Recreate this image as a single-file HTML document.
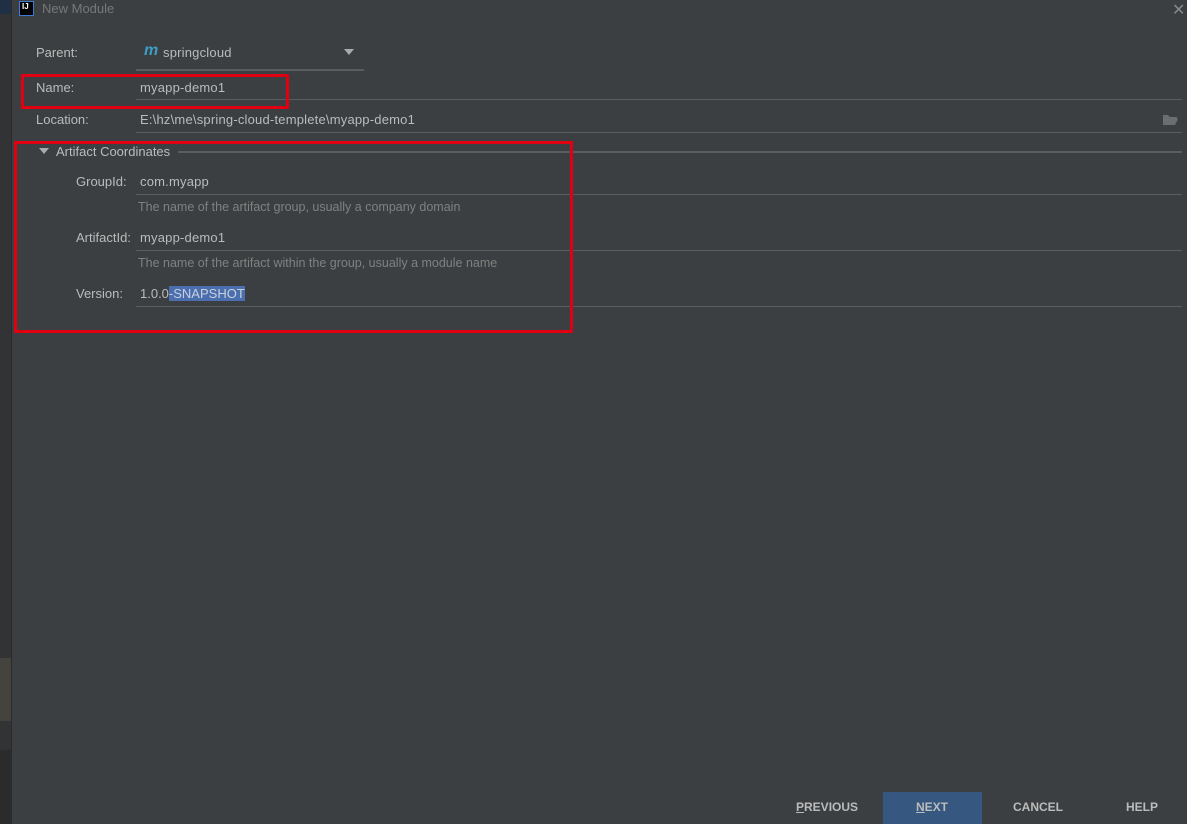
<!DOCTYPE html>
<html><head><style>
body{margin:0;width:1187px;height:824px;background:#3c3f41;font-family:"Liberation Sans",sans-serif;font-size:13px;color:#bbbbbb;position:relative;overflow:hidden}
.a{position:absolute}
.v{letter-spacing:0.2px}
.line{position:absolute;height:1px;background:#5a5d5f}
.red{position:absolute;border:3px solid #e00012;box-sizing:border-box}
.lbl{position:absolute;color:#bbbbbb}
.hint{position:absolute;color:#808080;font-size:12.5px}
.btn{position:absolute;top:792px;font-weight:bold;font-size:12px;color:#bbbbbb}
</style></head><body>
<div class="a" style="left:0;top:0;width:11px;height:824px;background:#313335"></div>
<div class="a" style="left:0;top:0;width:11px;height:14px;background:#1f2f44"></div>
<div class="a" style="left:0;top:658px;width:11px;height:63px;background:#45433d"></div>
<div class="a" style="left:0;top:750px;width:11px;height:74px;background:#2b2b2b"></div>
<div class="a" style="left:11px;top:0;width:1px;height:824px;background:#2b2b2b"></div>
<div class="a" style="left:19px;top:1px;width:15px;height:15px;background:#000;border:1px solid #3d7bd8;box-sizing:border-box;color:#fff;font-size:8px;font-weight:bold;line-height:10px;padding-left:2px">IJ</div>
<div class="a" style="left:42px;top:1px;color:#777;font-size:13px">New Module</div>
<div class="a" style="left:1172px;top:0;color:#888;font-size:16px">✕</div>

<div class="lbl" style="left:36px;top:45px">Parent:</div>
<div class="a" style="left:144px;top:42px;color:#3d9dc5;font-style:italic;font-weight:bold;font-size:16px">m</div>
<div class="a v" style="left:163px;top:45px">springcloud</div>
<div class="a" style="left:344px;top:49px;width:0;height:0;border-left:5px solid transparent;border-right:5px solid transparent;border-top:6px solid #aaa"></div>
<div class="line" style="left:136px;top:69px;width:228px;height:2px"></div>

<div class="lbl" style="left:36px;top:80px">Name:</div>
<div class="a v" style="left:140px;top:80px">myapp-demo1</div>
<div class="line" style="left:136px;top:99px;width:1046px"></div>
<div class="red" style="left:21px;top:74px;width:268px;height:35px"></div>

<div class="lbl" style="left:36px;top:112px">Location:</div>
<div class="a v" style="left:140px;top:112px">E:\hz\me\spring-cloud-templete\myapp-demo1</div>
<svg class="a" style="left:1162px;top:113px" width="17" height="13"><path d="M1 2h5l2 2h7v2H5L2 12H1z M5 6h11l-3 6H2z" fill="#6a6e70"/></svg>
<div class="line" style="left:136px;top:132px;width:1046px"></div>

<div class="a" style="left:39px;top:148px;width:0;height:0;border-left:5px solid transparent;border-right:5px solid transparent;border-top:6px solid #aaa"></div>
<div class="a" style="left:56px;top:144px">Artifact Coordinates</div>
<div class="line" style="left:178px;top:151px;width:1004px;height:2px"></div>

<div class="lbl" style="left:76px;top:174px">GroupId:</div>
<div class="a v" style="left:140px;top:174px">com.myapp</div>
<div class="line" style="left:136px;top:194px;width:1046px"></div>
<div class="hint" style="left:138px;top:200px">The name of the artifact group, usually a company domain</div>

<div class="lbl" style="left:76px;top:230px">ArtifactId:</div>
<div class="a v" style="left:140px;top:230px">myapp-demo1</div>
<div class="line" style="left:136px;top:250px;width:1046px"></div>
<div class="hint" style="left:138px;top:256px">The name of the artifact within the group, usually a module name</div>

<div class="lbl" style="left:76px;top:286px">Version:</div>
<div class="a" style="left:140px;top:286px">1.0.0<span style="background:#4b6eaf;color:#c8d0dc">-SNAPSHOT</span></div>
<div class="line" style="left:136px;top:306px;width:1046px"></div>
<div class="red" style="left:14px;top:141px;width:559px;height:192px"></div>

<div class="btn" style="left:796px;top:800px"><u>P</u>REVIOUS</div>
<div class="a" style="left:883px;top:792px;width:99px;height:32px;background:#365880"></div>
<div class="btn" style="left:916px;top:800px"><u>N</u>EXT</div>
<div class="btn" style="left:1013px;top:800px">CANCEL</div>
<div class="btn" style="left:1126px;top:800px">HELP</div>
</body></html>
